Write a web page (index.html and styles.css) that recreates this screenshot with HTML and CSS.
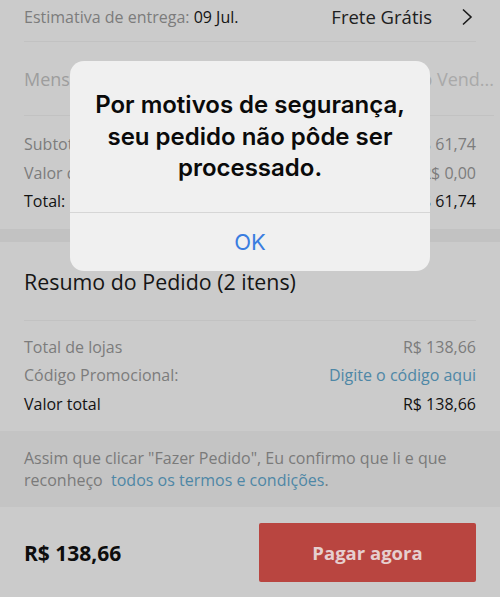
FILE: index.html
```html
<!DOCTYPE html>
<html lang="pt-BR">
<head>
<meta charset="utf-8">
<link rel="stylesheet" href="styles.css">
</head>
<body>
<div class="page">
  <section class="card">
    <div class="row-top">
      <span class="muted">Estimativa de entrega: <span class="dark">09 Jul.</span></span>
      <span class="shipping">Frete Grátis
        <svg class="chev" width="12" height="18" viewBox="0 0 12 18"><polyline points="2,1.5 10,9 2,16.5" fill="none" stroke="#1a1a1a" stroke-width="1.6"/></svg>
      </span>
    </div>
    <div class="row-msg">
      <span class="placeholder">Mensagem</span>
      <span class="placeholder right">Deixe uma mensagem para o Vend...</span>
    </div>
    <div class="lines">
      <div class="line"><span class="muted">Subtotal:</span><span class="muted">R$ 61,74</span></div>
      <div class="line"><span class="muted">Valor do frete:</span><span class="muted">R$ 0,00</span></div>
      <div class="line"><span class="dark">Total:</span><span class="dark">R$ 61,74</span></div>
    </div>
  </section>
  <div class="band"></div>
  <section class="card">
    <h2 class="summary-title">Resumo do Pedido (2 itens)</h2>
    <div class="lines summary">
      <div class="line"><span class="muted">Total de lojas</span><span class="muted">R$ 138,66</span></div>
      <div class="line"><span class="muted">Código Promocional:</span><span class="link">Digite o código aqui</span></div>
      <div class="line"><span class="dark">Valor total</span><span class="dark">R$ 138,66</span></div>
    </div>
  </section>
  <div class="terms">Assim que clicar "Fazer Pedido", Eu confirmo que li e que reconheço&nbsp; <span class="link">todos os termos e condições</span>.</div>
  <footer class="paybar">
    <span class="price">R$ 138,66</span>
    <button class="pay">Pagar agora</button>
  </footer>
</div>
<div class="alert">
  <div class="alert-title">Por motivos de segurança, seu pedido não pôde ser processado.</div>
  <div class="alert-btn">OK</div>
</div>
</body>
</html>
```
FILE: styles.css
```css
* { box-sizing: border-box; margin: 0; padding: 0; }
html, body { width: 500px; height: 597px; overflow: hidden; }
body {
  background: #cbcbcb;
  font-family: "Open Sans", "Liberation Sans", sans-serif;
  position: relative;
}
.page { display: flex; flex-direction: column; height: 597px; }
.card { padding: 0 24px; }
.muted { color: #7c7c7c; }
.dark { color: #131313; }
.link { color: #4e87a6; }
.row-top {
  display: flex; justify-content: space-between; align-items: center;
  font-size: 16px; line-height: 22px;
  padding: 6px 0 13px;
  border-bottom: 1px solid #c2c2c2;
}
.shipping { display: flex; align-items: center; gap: 29px; color: #202020; font-size: 18.5px; margin-top: -1px; }
.chev { margin-right: 3px; }
.row-msg {
  display: flex; justify-content: space-between; align-items: center;
  height: 74px; font-size: 18px;
  border-bottom: 1px solid #c2c2c2;
  margin-right: -18px;
}
.placeholder { color: #9d9d9d; white-space: nowrap; }
.placeholder.right { color: #a9a9a9; }
.lines { padding: 14px 0 13px; font-size: 16px; }
.line { display: flex; justify-content: space-between; height: 28.5px; line-height: 28.5px; }
.band { height: 13px; background: #c2c2c2; }
.summary-title {
  font-weight: 400; font-size: 21.4px; color: #151515;
  height: 79px; line-height: 80px;
  border-bottom: 1px solid #c2c2c2;
}
.summary { padding: 12px 0 13px; }
.terms {
  background: #c4c4c4; color: #7a7a7a;
  font-size: 16px; line-height: 22px;
  padding: 16px 24px 16px;
}
.paybar {
  flex: 1; display: flex; justify-content: space-between; align-items: flex-start;
  padding: 16px 24px 0;
}
.price { font-weight: 700; font-size: 21px; color: #0d0d0d; margin-top: 16px; }
.pay {
  width: 217px; height: 59px; border: none; border-radius: 2px;
  background: #b94540; color: #e6cfcf;
  font-family: "Open Sans", "Liberation Sans", sans-serif;
  font-weight: 700; font-size: 18.5px;
}
.alert {
  position: absolute; left: 70px; top: 61px; width: 360px;
  background: #f0f0f0; border-radius: 14px;
  font-family: Inter, "Liberation Sans", sans-serif;
  text-align: center;
}
.alert-title {
  font-weight: 600; font-size: 24px; line-height: 31.5px; color: #0a0a0a;
  padding: 28px 22px 28px;
  border-bottom: 1px solid #d6d6d6;
}
.alert-btn { height: 58px; line-height: 58px; font-size: 22px; color: #3a7de0; }
```
